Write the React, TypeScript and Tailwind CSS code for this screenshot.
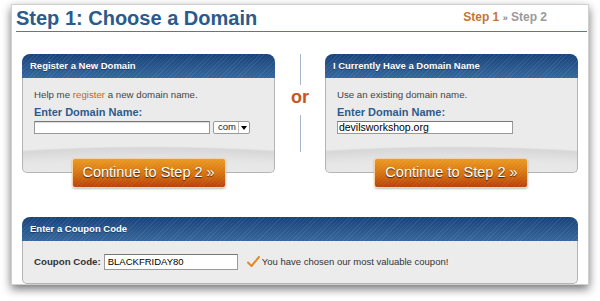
import React from "react";

const headerBg =
  "bg-[repeating-linear-gradient(135deg,rgba(255,255,255,0.07)_0px,rgba(255,255,255,0.07)_1px,transparent_1px,transparent_3px),linear-gradient(#18437a,#36669c)]";
const bodyBg =
  "bg-[radial-gradient(380px_68px_at_50%_calc(100%+42px),#f4f4f4_0%,#e6e6e6_80%,#d7d7d7_97%,#ebebeb_100%)]";
const btnBg =
  "bg-[repeating-linear-gradient(135deg,rgba(255,255,255,0.06)_0px,rgba(255,255,255,0.06)_1px,transparent_1px,transparent_3px),linear-gradient(#ec9a22,#d4700f_55%,#b8400a)]";

const PanelHeader = ({ title }: { title: string }) => (
  <div
    className={`h-[24px] rounded-t-[8px] ${headerBg} flex items-center pl-[8px] text-[9.5px] font-bold text-white [text-shadow:0_1px_0_rgba(0,0,0,0.35)]`}
  >
    {title}
  </div>
);

const ContinueButton = () => (
  <div className="relative z-10 -mt-[15px] flex justify-center">
    <button
      className={`w-[154px] h-[30px] rounded-[3px] border border-[#f6d2a8] ${btnBg} text-white text-[14.5px] [text-shadow:0_1px_1px_rgba(0,0,0,0.7)] shadow-[0_1px_2px_rgba(0,0,0,0.25)]`}
    >
      Continue to Step 2 »
    </button>
  </div>
);

const DomainPanel = ({
  title,
  help,
  children,
}: {
  title: string;
  help: React.ReactNode;
  children: React.ReactNode;
}) => (
  <div className="w-[254px] flex flex-col">
    <PanelHeader title={title} />
    <div
      className={`h-[95px] border-x border-b border-[#b4b4b4] rounded-b-[5px] ${bodyBg} pl-[11px] pt-[11px]`}
    >
      <div className="text-[9.7px] leading-[12px] text-[#444]">{help}</div>
      <div className="mt-[5px] text-[11px] leading-[13px] font-bold text-[#2b5b8d]">
        Enter Domain Name:
      </div>
      <div className="mt-[2px] flex items-center gap-[3px]">{children}</div>
    </div>
    <ContinueButton />
  </div>
);

export default function App() {
  return (
    <div className="w-[600px] h-[301px] bg-white font-['Liberation_Sans',Arial,sans-serif] pt-[4px]">
      <div className="ml-[11px] w-[578px] h-[281px] bg-white border border-[#d0d0d0] shadow-[0_4px_9px_rgba(0,0,0,0.55)] flex flex-col">
        {/* title row */}
        <div className="ml-[4px] mr-[1px] pt-[1px] flex justify-between border-b border-[#4d7bab]">
          <h1 className="text-[20px] leading-[24px] font-bold text-[#2b5a8c] pb-[1px]">
            Step 1: Choose a Domain
          </h1>
          <div className="mt-[4px] mr-[40px] text-[12px] leading-[14px] font-bold text-[#9a9a9a]">
            <span className="text-[#c8742f]">Step 1</span>{" "}
            <span className="text-[9px] text-[#888]">»</span> Step 2
          </div>
        </div>

        {/* domain panels */}
        <div className="mt-[22px] px-[10px] flex">
          <DomainPanel
            title="Register a New Domain"
            help={
              <>
                Help me <span className="text-[#c8631e]">register</span> a new
                domain name.
              </>
            }
          >
            <div className="w-[176px] h-[13px] bg-white border border-[#999] border-t-[#777] shadow-[inset_0_1px_1px_rgba(0,0,0,0.15)]" />
            <div className="w-[37px] h-[13px] bg-white border border-[#999] rounded-[2px] flex items-center justify-between pl-[4px] text-[9.5px] text-[#222]">
              com
              <span className="w-[11px] h-[11px] border-l border-[#bbb] flex items-center justify-center">
                <span className="w-0 h-0 border-x-[3px] border-x-transparent border-t-[4px] border-t-black" />
              </span>
            </div>
          </DomainPanel>

          <div className="w-[50px] flex flex-col items-center">
            <div className="w-px h-[31px] bg-[#a3b6ca]" />
            <div className="mt-[2px] text-[18px] leading-[20px] font-bold text-[#c8561c]">
              or
            </div>
            <div className="mt-[8px] w-px h-[37px] bg-[#a3b6ca]" />
          </div>

          <DomainPanel
            title="I Currently Have a Domain Name"
            help="Use an existing domain name."
          >
            <div className="w-[176px] h-[13px] bg-white border border-[#999] border-t-[#777] flex items-center pl-[1px] text-[10.5px] text-black">
              devilsworkshop.org
            </div>
          </DomainPanel>
        </div>

        {/* coupon */}
        <div className="mt-[29px] mx-[10px] flex flex-col">
          <PanelHeader title="Enter a Coupon Code" />
          <div className="h-[43px] border-x border-b border-[#b4b4b4] rounded-b-[5px] bg-[#ececec] flex items-center pl-[11px]">
            <span className="text-[9.7px] font-bold text-[#333]">Coupon Code:</span>
            <div className="ml-[3px] w-[134px] h-[16px] bg-white border border-[#999] border-t-[#777] flex items-center pl-[3px] text-[9.5px] text-black">
              BLACKFRIDAY80
            </div>
            <svg
              className="ml-[9px]"
              width="13"
              height="12"
              viewBox="0 0 13 12"
              fill="none"
            >
              <path
                d="M1 6.5 L4.5 10 L12 1"
                stroke="#e08a2a"
                strokeWidth="2"
                strokeLinecap="round"
                strokeLinejoin="round"
              />
            </svg>
            <span className="ml-[2px] text-[9.5px] text-[#333]">
              You have chosen our most valuable coupon!
            </span>
          </div>
        </div>
      </div>
    </div>
  );
}
